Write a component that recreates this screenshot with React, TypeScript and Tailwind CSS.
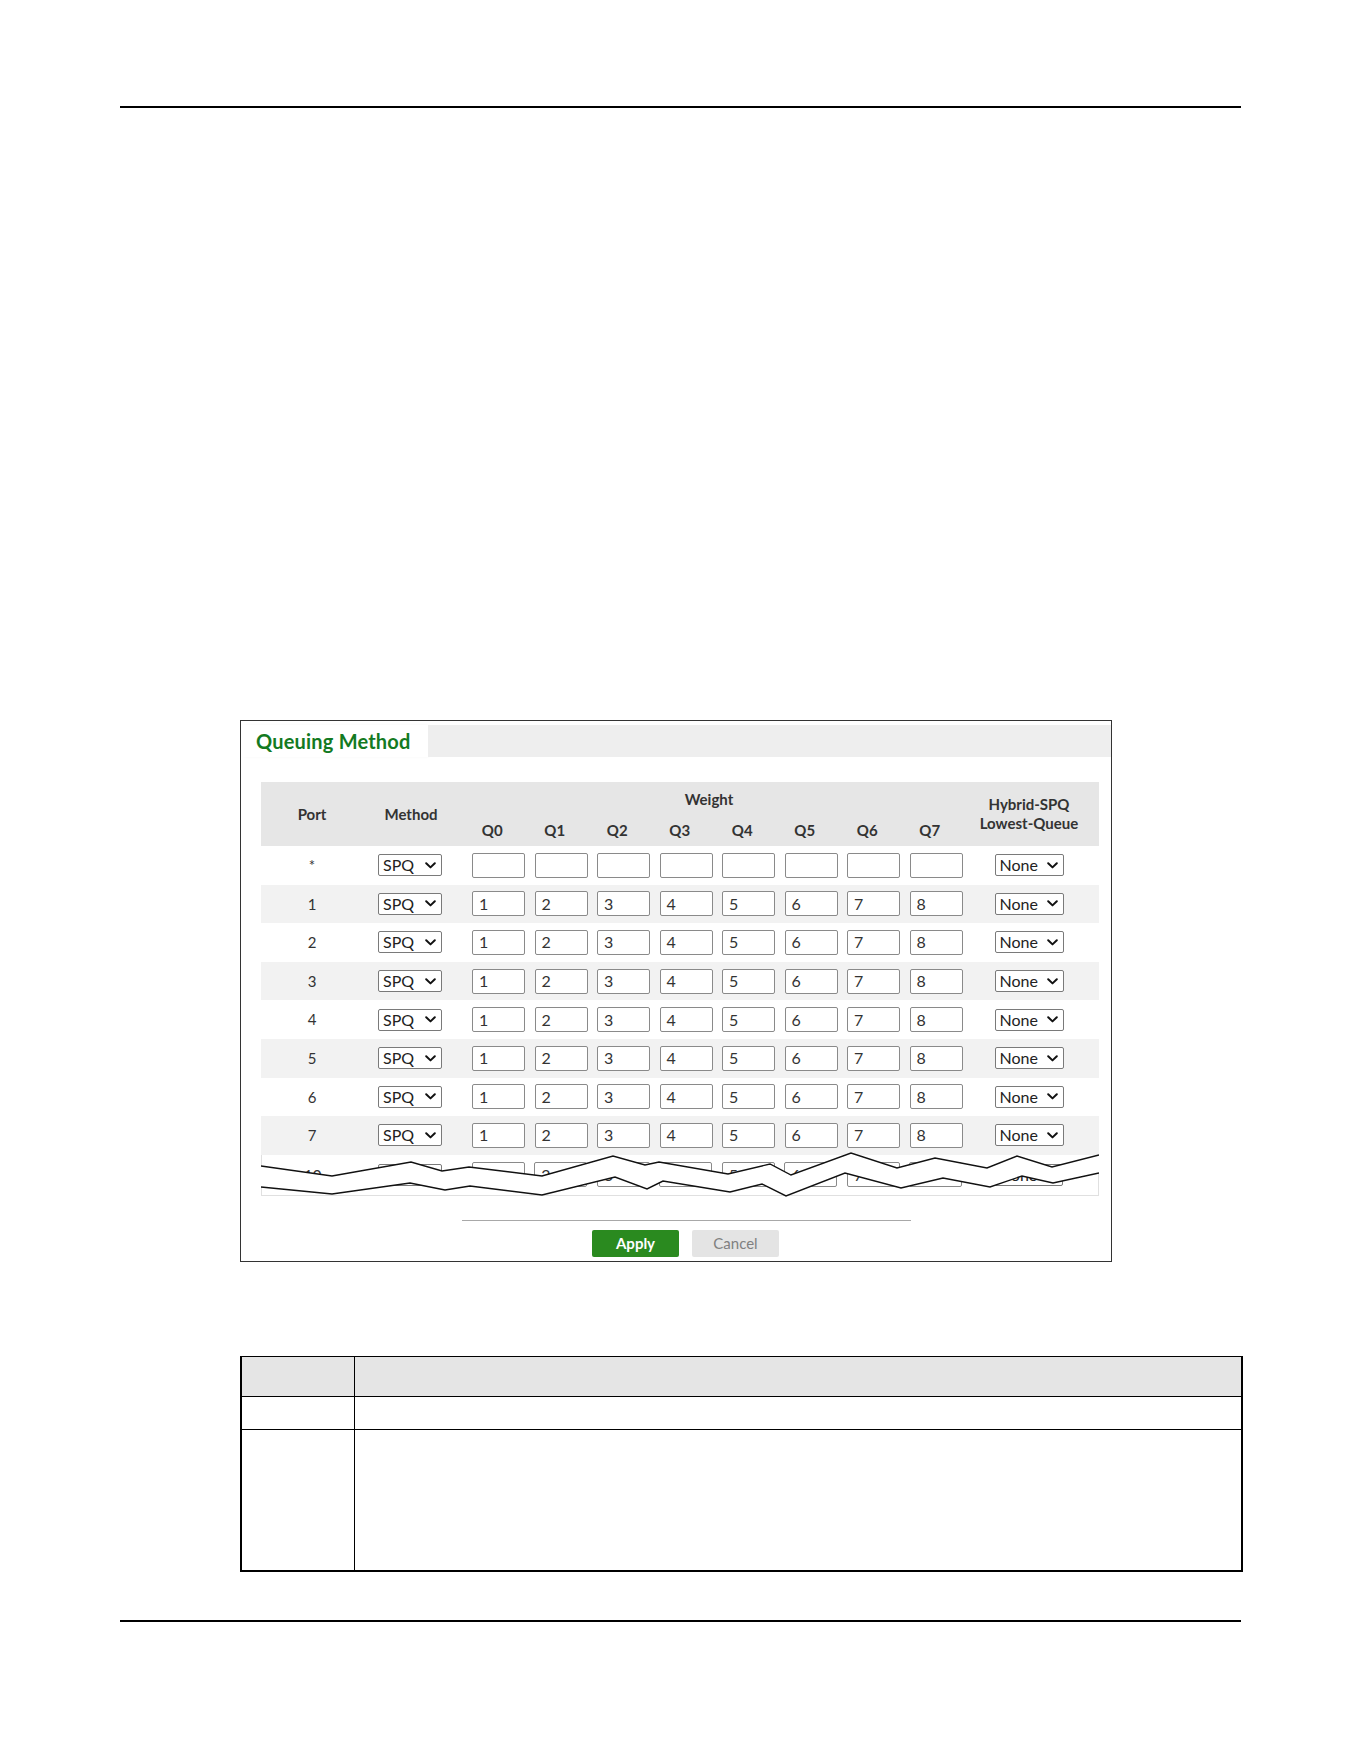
import React from 'react';

const PORTS = ['1', '2', '3', '4', '5', '6', '7'];
const QUEUES = ['Q0', 'Q1', 'Q2', 'Q3', 'Q4', 'Q5', 'Q6', 'Q7'];
const WEIGHTS = ['1', '2', '3', '4', '5', '6', '7', '8'];

// zig-zag break drawn across the last (cut off) row
const TOP_EDGE: [number, number][] = [
  [261, 1166], [332, 1176], [411, 1162], [442, 1171], [469, 1167], [542, 1176],
  [613, 1156], [645, 1165], [659, 1162], [728, 1174], [770, 1164], [791, 1175],
  [851, 1153], [897, 1168], [935, 1158], [987, 1168], [1017, 1156], [1052, 1167], [1099, 1155],
];
const BOTTOM_EDGE: [number, number][] = [
  [261, 1187], [332, 1194], [410, 1183], [445, 1190], [470, 1186], [542, 1195],
  [615, 1177], [647, 1189], [663, 1181], [730, 1192], [762, 1184], [786, 1196],
  [845, 1173], [901, 1188], [943, 1178], [990, 1187], [1022, 1176], [1053, 1183], [1099, 1173],
];

const toPoints = (pts: [number, number][]) => pts.map(([x, y]) => `${x},${y}`).join(' ');

function Chevron() {
  return (
    <svg width="11" height="7" viewBox="0 0 11 7" fill="none">
      <path d="M1.2 1.2 L5.5 5.4 L9.8 1.2" stroke="#111" strokeWidth="2" strokeLinecap="round" strokeLinejoin="round" />
    </svg>
  );
}

function FakeSelect({ label, width }: { label: string; width: string }) {
  return (
    <div className={`${width} h-[22px] bg-white border border-[#7a7a7a] rounded-[2px] flex items-center justify-between pl-[4px] pr-[5px] text-[16px] text-[#222] leading-none`}>
      <span>{label}</span>
      <Chevron />
    </div>
  );
}

function WeightBox({ value }: { value: string }) {
  return (
    <div className="w-[53px] h-[25px] bg-white border border-[#8a8a8a] rounded-[2px] flex items-center pl-[6px] text-[16px] text-[#333] leading-none">
      {value}
    </div>
  );
}

function PortRow({ port, values, shaded, height }: { port: string; values: string[]; shaded: boolean; height: string }) {
  return (
    <div className={`flex items-center ${height} ${shaded ? 'bg-[#f2f2f2]' : 'bg-white'}`}>
      <div className="w-[102px] text-center text-[15px] text-[#333]">{port}</div>
      <div className="w-[96px] flex justify-center pr-[2px]">
        <FakeSelect label="SPQ" width="w-[64px]" />
      </div>
      {values.map((v, i) => (
        <div key={i} className="w-[62.5px] pl-[13px]">
          <WeightBox value={v} />
        </div>
      ))}
      <div className="w-[140px] flex justify-center">
        <FakeSelect label="None" width="w-[69px]" />
      </div>
    </div>
  );
}

export default function App() {
  const empty = QUEUES.map(() => '');

  return (
    <div className="min-h-[1761px] w-full bg-white font-['Lato','Open_Sans',sans-serif] overflow-hidden">
      <div className="pt-[106px] pl-[120px]">
        <div className="w-[1121px] h-[2px] bg-black" />
      </div>

      {/* Queuing Method panel */}
      <div className="mt-[612px] ml-[240px] w-[872px] h-[542px] border border-[#333]">
        <div className="pt-[4px] flex h-[36px]">
          <div className="w-[187px] h-[32px] bg-white flex items-center pl-[15px] shadow-[2px_0_3px_-1px_rgba(0,0,0,0.08)]">
            <span className="text-[20px] font-bold text-[#137a22] tracking-[0.2px]">Queuing Method</span>
          </div>
          <div className="flex-1 h-[32px] bg-[#eeeeee]" />
        </div>

        <div className="relative mt-[25px] ml-[20px] w-[838px]">
          <div className="flex h-[64px] bg-[#e6e6e6] text-[15px] font-bold text-[#333]">
            <div className="w-[102px] flex items-center justify-center">Port</div>
            <div className="w-[96px] flex items-center justify-center">Method</div>
            <div className="w-[500px] flex flex-col">
              <div className="mt-[8px] leading-[18px] text-center">Weight</div>
              <div className="mt-[13px] flex leading-[18px]">
                {QUEUES.map(q => (
                  <div key={q} className="w-[62.5px] text-center pl-[4px]">{q}</div>
                ))}
              </div>
            </div>
            <div className="w-[140px] flex flex-col items-center justify-center leading-[19px]">
              <span>Hybrid-SPQ</span>
              <span>Lowest-Queue</span>
            </div>
          </div>

          <PortRow port="*" values={empty} shaded={false} height="h-[38.6px]" />
          {PORTS.map((p, i) => (
            <PortRow key={p} port={p} values={WEIGHTS} shaded={i % 2 === 0} height="h-[38.6px]" />
          ))}
          <div className="border-x border-b border-[#e0e0e0]">
            <PortRow port="10" values={WEIGHTS} shaded={false} height="h-[40px]" />
          </div>

          <svg
            className="absolute left-0 top-[363px]"
            width="838"
            height="55"
            viewBox="261 1145 838 55"
          >
            <polygon points={toPoints([...TOP_EDGE, ...[...BOTTOM_EDGE].reverse()])} fill="#fff" />
            <polyline points={toPoints(TOP_EDGE)} fill="none" stroke="#111" strokeWidth="1.4" />
            <polyline points={toPoints(BOTTOM_EDGE)} fill="none" stroke="#111" strokeWidth="1.4" />
          </svg>
        </div>

        <div className="mt-[24px] ml-[221px] w-[449px] h-px bg-[#a8a8a8]" />

        <div className="mt-[9px] ml-[351px] flex gap-[13px]">
          <button className="w-[87px] h-[27px] rounded-[2px] bg-[#2a8a1f] text-white text-[15px] font-bold">Apply</button>
          <button className="w-[87px] h-[27px] rounded-[2px] bg-[#e4e4e4] text-[#808080] text-[15px]">Cancel</button>
        </div>
      </div>

      {/* field description table */}
      <div className="mt-[94px] ml-[240px] w-[1003px] border-t border-x-2 border-b-2 border-black grid grid-cols-[113px_1fr]">
        <div className="h-[40px] bg-[#e5e5e5] border-r border-b border-black" />
        <div className="h-[40px] bg-[#e5e5e5] border-b border-black" />
        <div className="h-[33px] border-r border-b border-black" />
        <div className="h-[33px] border-b border-black" />
        <div className="h-[140px] border-r border-black" />
        <div className="h-[140px]" />
      </div>

      <div className="mt-[48px] pl-[120px]">
        <div className="w-[1121px] h-[2px] bg-black" />
      </div>
    </div>
  );
}
